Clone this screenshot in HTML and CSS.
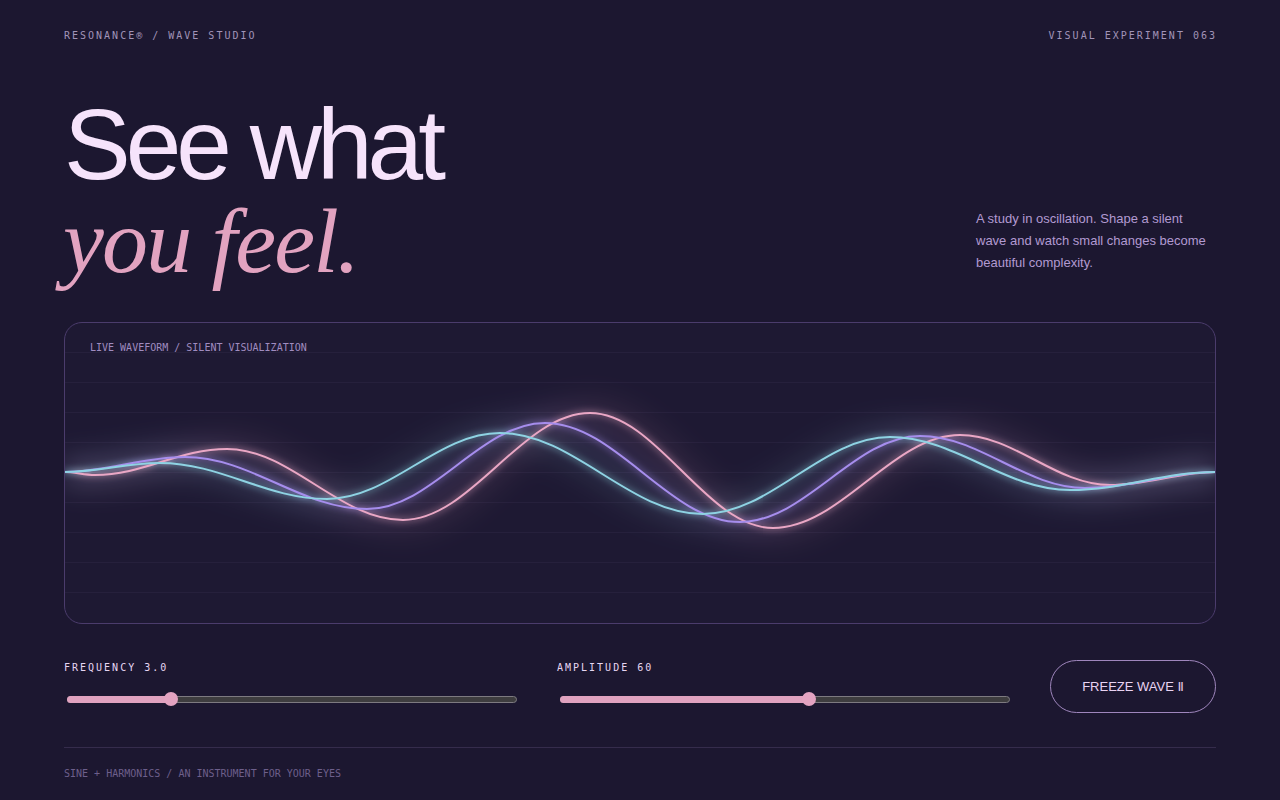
FILE: index.html
```html
<!DOCTYPE html>
<html lang="en">
<head>
<meta charset="utf-8">
<title>Resonance — Wave Studio</title>
<link rel="stylesheet" href="styles.css">
</head>
<body>
<div class="page">
  <header class="topbar">
    <span class="brand">RESONANCE® / WAVE STUDIO</span>
    <span class="exp">VISUAL EXPERIMENT 063</span>
  </header>

  <section class="hero">
    <h1 class="title">
      <span class="line1">See what</span>
      <span class="line2">you feel.</span>
    </h1>
    <p class="intro">A study in oscillation. Shape a silent wave and watch small changes become beautiful complexity.</p>
  </section>

  <section class="card">
    <div class="card-label">LIVE WAVEFORM / SILENT VISUALIZATION</div>
    <svg class="wave" viewBox="64 322 1152 302" preserveAspectRatio="none" aria-hidden="true">
      <g class="grid">
        <line x1="64" x2="1216" y1="352.5" y2="352.5"/>
        <line x1="64" x2="1216" y1="382.5" y2="382.5"/>
        <line x1="64" x2="1216" y1="412.5" y2="412.5"/>
        <line x1="64" x2="1216" y1="442.5" y2="442.5"/>
        <line x1="64" x2="1216" y1="472.5" y2="472.5"/>
        <line x1="64" x2="1216" y1="502.5" y2="502.5"/>
        <line x1="64" x2="1216" y1="532.5" y2="532.5"/>
        <line x1="64" x2="1216" y1="562.5" y2="562.5"/>
        <line x1="64" x2="1216" y1="592.5" y2="592.5"/>
      </g>
      <defs>
        <filter id="halo" x="-10%" y="-50%" width="120%" height="200%">
          <feGaussianBlur stdDeviation="14"/>
        </filter>
        <filter id="glow" x="-10%" y="-50%" width="120%" height="200%">
          <feGaussianBlur in="SourceGraphic" stdDeviation="3.5" result="b"/>
          <feMerge>
            <feMergeNode in="b"/>
            <feMergeNode in="SourceGraphic"/>
          </feMerge>
        </filter>
      </defs>
      <g class="halo" filter="url(#halo)">
        <path class="h-pink" d="M64,472 C75.3,472 83.7,475 95,475 C143,475 179,449 227,449 C291,449 339,520 403,520 C471,520 522,413 590,413 C656.6,413 706.4,528 773,528 C841,528 892,435 960,435 C1014.6,435 1055.4,485 1110,485 C1148.6,485 1177.4,472 1216,472"/>
        <path class="h-purple" d="M64,472 C108,472 141,457 185,457 C251,457 301,509 367,509 C432,509 480,423 545,423 C616,423 669,522 740,522 C805.5,522 854.5,436 920,436 C980,436 1025,488 1085,488 C1132.7,488 1168.3,472 1216,472"/>
        <path class="h-cyan" d="M64,472 C99,472 125,463 160,463 C221,463 266,499 327,499 C390,499 437,433 500,433 C574,433 629,514 703,514 C771,514 822,437 890,437 C955.5,437 1004.5,490 1070,490 C1123,490 1163,472 1216,472"/>
      </g>
      <g filter="url(#glow)">
        <path class="w-pink" d="M64,472 C75.3,472 83.7,475 95,475 C143,475 179,449 227,449 C291,449 339,520 403,520 C471,520 522,413 590,413 C656.6,413 706.4,528 773,528 C841,528 892,435 960,435 C1014.6,435 1055.4,485 1110,485 C1148.6,485 1177.4,472 1216,472"/>
        <path class="w-purple" d="M64,472 C108,472 141,457 185,457 C251,457 301,509 367,509 C432,509 480,423 545,423 C616,423 669,522 740,522 C805.5,522 854.5,436 920,436 C980,436 1025,488 1085,488 C1132.7,488 1168.3,472 1216,472"/>
        <path class="w-cyan" d="M64,472 C99,472 125,463 160,463 C221,463 266,499 327,499 C390,499 437,433 500,433 C574,433 629,514 703,514 C771,514 822,437 890,437 C955.5,437 1004.5,490 1070,490 C1123,490 1163,472 1216,472"/>
      </g>
    </svg>
  </section>

  <section class="controls">
    <div class="control">
      <div class="control-label">FREQUENCY 3.0</div>
      <div class="slider">
        <div class="track"></div>
        <div class="fill" style="width: 23.1%"></div>
        <div class="thumb" style="left: calc(7px + 0.222 * (100% - 14px))"></div>
      </div>
    </div>
    <div class="control">
      <div class="control-label">AMPLITUDE 60</div>
      <div class="slider">
        <div class="track"></div>
        <div class="fill" style="width: 55.5%"></div>
        <div class="thumb" style="left: calc(7px + 0.555 * (100% - 14px))"></div>
      </div>
    </div>
    <button class="freeze" type="button">FREEZE WAVE <span class="pause">Ⅱ</span></button>
  </section>

  <footer class="footer">SINE + HARMONICS / AN INSTRUMENT FOR YOUR EYES</footer>
</div>
</body>
</html>
```

FILE: styles.css
```css
* { box-sizing: border-box; }

html, body {
  margin: 0;
  padding: 0;
  background: #1c1730;
}

body {
  font-family: "Liberation Sans", Arial, sans-serif;
  color: #f4e2f8;
}

.page {
  width: 1280px;
  height: 800px;
  padding: 30px 64px 0;
  overflow: hidden;
}

.topbar {
  display: flex;
  justify-content: space-between;
  font-family: "DejaVu Sans Mono", monospace;
  font-size: 10px;
  line-height: 12px;
  letter-spacing: 2px;
  color: #a194b8;
}

.exp { margin-right: -1px; }

.hero {
  display: flex;
  justify-content: space-between;
  align-items: flex-end;
  margin-top: 54px;
}

.title {
  margin: 0;
  font-weight: normal;
}

.line1 {
  display: block;
  font-family: "Liberation Sans", Arial, sans-serif;
  font-size: 100px;
  line-height: 96px;
  letter-spacing: -0.05em;
  color: #f6e3fb;
}

.line2 {
  display: block;
  font-family: "Liberation Serif", "Times New Roman", serif;
  font-style: italic;
  font-size: 92px;
  line-height: 98px;
  letter-spacing: -0.02em;
  color: #e2a3c0;
  margin-left: -1px;
}

.intro {
  width: 240px;
  margin: 0 0 16px;
  font-size: 13px;
  line-height: 22px;
  color: #b29ad2;
}

.card {
  position: relative;
  height: 302px;
  margin-top: 32px;
  border: 1px solid #4b3c6c;
  border-radius: 18px;
  background: #1e1933;
  overflow: hidden;
}

.card-label {
  position: relative;
  z-index: 1;
  padding: 19px 25px 0;
  font-family: "DejaVu Sans Mono", monospace;
  font-size: 10px;
  line-height: 12px;
  color: #a08cc0;
}

.wave {
  position: absolute;
  left: -1px;
  top: -1px;
  width: 1152px;
  height: 302px;
}

.grid line {
  stroke: rgba(200, 170, 240, 0.05);
  stroke-width: 1;
}

.halo path {
  fill: none;
  stroke-width: 26;
  opacity: 0.1;
}
.h-pink { stroke: #e8a6c8; }
.h-purple { stroke: #a890f0; }
.h-cyan { stroke: #90d4e6; }

.w-pink, .w-purple, .w-cyan {
  fill: none;
  stroke-width: 2;
  stroke-linecap: round;
}
.w-pink { stroke: #eaa7c5; }
.w-purple { stroke: #a68ded; }
.w-cyan { stroke: #8ed3e3; }

.controls {
  display: grid;
  grid-template-columns: 1fr 1fr 166px;
  column-gap: 40px;
  align-items: center;
  margin-top: 36px;
}

.control {
  padding-bottom: 5px;
}

.control-label {
  font-family: "DejaVu Sans Mono", monospace;
  font-size: 10px;
  line-height: 12px;
  letter-spacing: 2px;
  color: #e6d6f2;
  margin-bottom: 18px;
}

.slider {
  position: relative;
  height: 14px;
  margin: 0 0 0 3px;
}

.track {
  position: absolute;
  left: 0;
  right: 0;
  top: 3.5px;
  height: 7px;
  border-radius: 4px;
  background: #3e3d3f;
  border: 1px solid #7d7a80;
}

.fill {
  position: absolute;
  left: 0;
  top: 3.5px;
  height: 7px;
  border-radius: 4px;
  background: #e0a2bf;
}

.thumb {
  position: absolute;
  top: 0;
  width: 14px;
  height: 14px;
  margin-left: -7px;
  border-radius: 50%;
  background: #e3a3c1;
}

.freeze {
  height: 53px;
  border: 1px solid #9f86bd;
  border-radius: 27px;
  background: transparent;
  font-family: "Liberation Sans", Arial, sans-serif;
  font-size: 13px;
  color: #e9d3f3;
  padding: 0;
  cursor: pointer;
}

.pause {
  font-family: "DejaVu Sans", sans-serif;
  font-size: 13px;
  color: #e6c6e4;
}

.footer {
  margin-top: 34px;
  border-top: 1px solid #352c4c;
  padding-top: 20px;
  font-family: "DejaVu Sans Mono", monospace;
  font-size: 10px;
  line-height: 12px;
  color: #6d5f8b;
}
```
